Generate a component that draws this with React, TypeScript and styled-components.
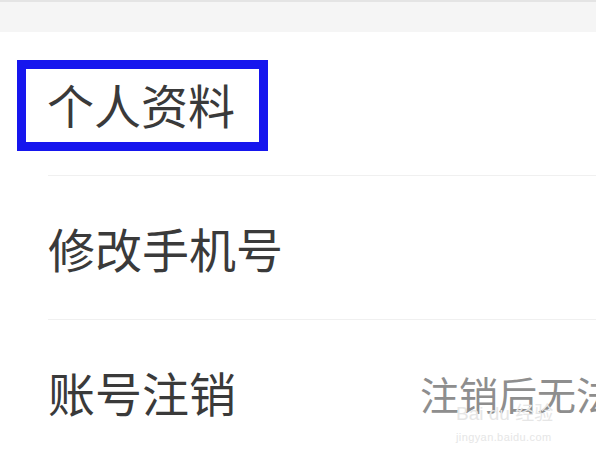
import React from "react";
import styled, { createGlobalStyle } from "styled-components";

const GlobalStyle = createGlobalStyle`
  html, body {
    margin: 0;
    padding: 0;
    background: #fff;
    overflow: hidden;
  }
  body {
    font-family: "Noto Sans CJK SC", "Noto Sans", sans-serif;
  }
`;

const Page = styled.div`
  position: relative;
  width: 596px;
  height: 456px;
  overflow: hidden;
  background: #fff;
`;

const TopBand = styled.div`
  height: 30px;
  background: #f5f5f5;
  border-top: 2px solid #e4e4e4;
`;

const List = styled.div`
  display: flex;
  flex-direction: column;
`;

const Row = styled.div<{ $last?: boolean }>`
  height: 143px;
  margin-left: 48px;
  display: flex;
  align-items: center;
  white-space: nowrap;
  border-bottom: ${(p) => (p.$last ? "none" : "1px solid #f0f0f0")};
`;

const Label = styled.span`
  font-size: 47px;
  font-weight: 400;
  line-height: 1.3;
  color: #3a3a3a;
  flex: none;
`;

const Value = styled.span`
  font-size: 39px;
  font-weight: 400;
  line-height: 1.3;
  color: #8e8e8e;
  margin-left: 184px;
  flex: none;
  padding-top: 4px;
`;

const Highlight = styled.span`
  display: inline-block;
  margin-left: -31px;
  margin-top: 4px;
  padding: 4px 24px 8px 21px;
  border: 9px solid #1616ee;
  font-size: 47px;
  font-weight: 400;
  line-height: 1.3;
  color: #3a3a3a;
`;

const Watermark = styled.div`
  position: absolute;
  left: 456px;
  top: 404px;
  display: flex;
  flex-direction: column;
  align-items: flex-start;
  color: #e6e6e6;
  font-family: "Liberation Sans", "Noto Sans CJK SC", sans-serif;
  pointer-events: none;
`;

const MarkTop = styled.span`
  font-size: 19px;
  line-height: 1;
`;

const MarkBottom = styled.span`
  font-size: 11px;
  line-height: 1;
  margin-top: 9px;
  letter-spacing: 0.4px;
`;

export default function App() {
  return (
    <Page>
      <GlobalStyle />
      <TopBand />
      <List>
        <Row>
          <Highlight>个人资料</Highlight>
        </Row>
        <Row>
          <Label>修改手机号</Label>
        </Row>
        <Row $last>
          <Label>账号注销</Label>
          <Value>注销后无法恢复</Value>
        </Row>
      </List>
      <Watermark>
        <MarkTop>Bai du 经验</MarkTop>
        <MarkBottom>jingyan.baidu.com</MarkBottom>
      </Watermark>
    </Page>
  );
}
